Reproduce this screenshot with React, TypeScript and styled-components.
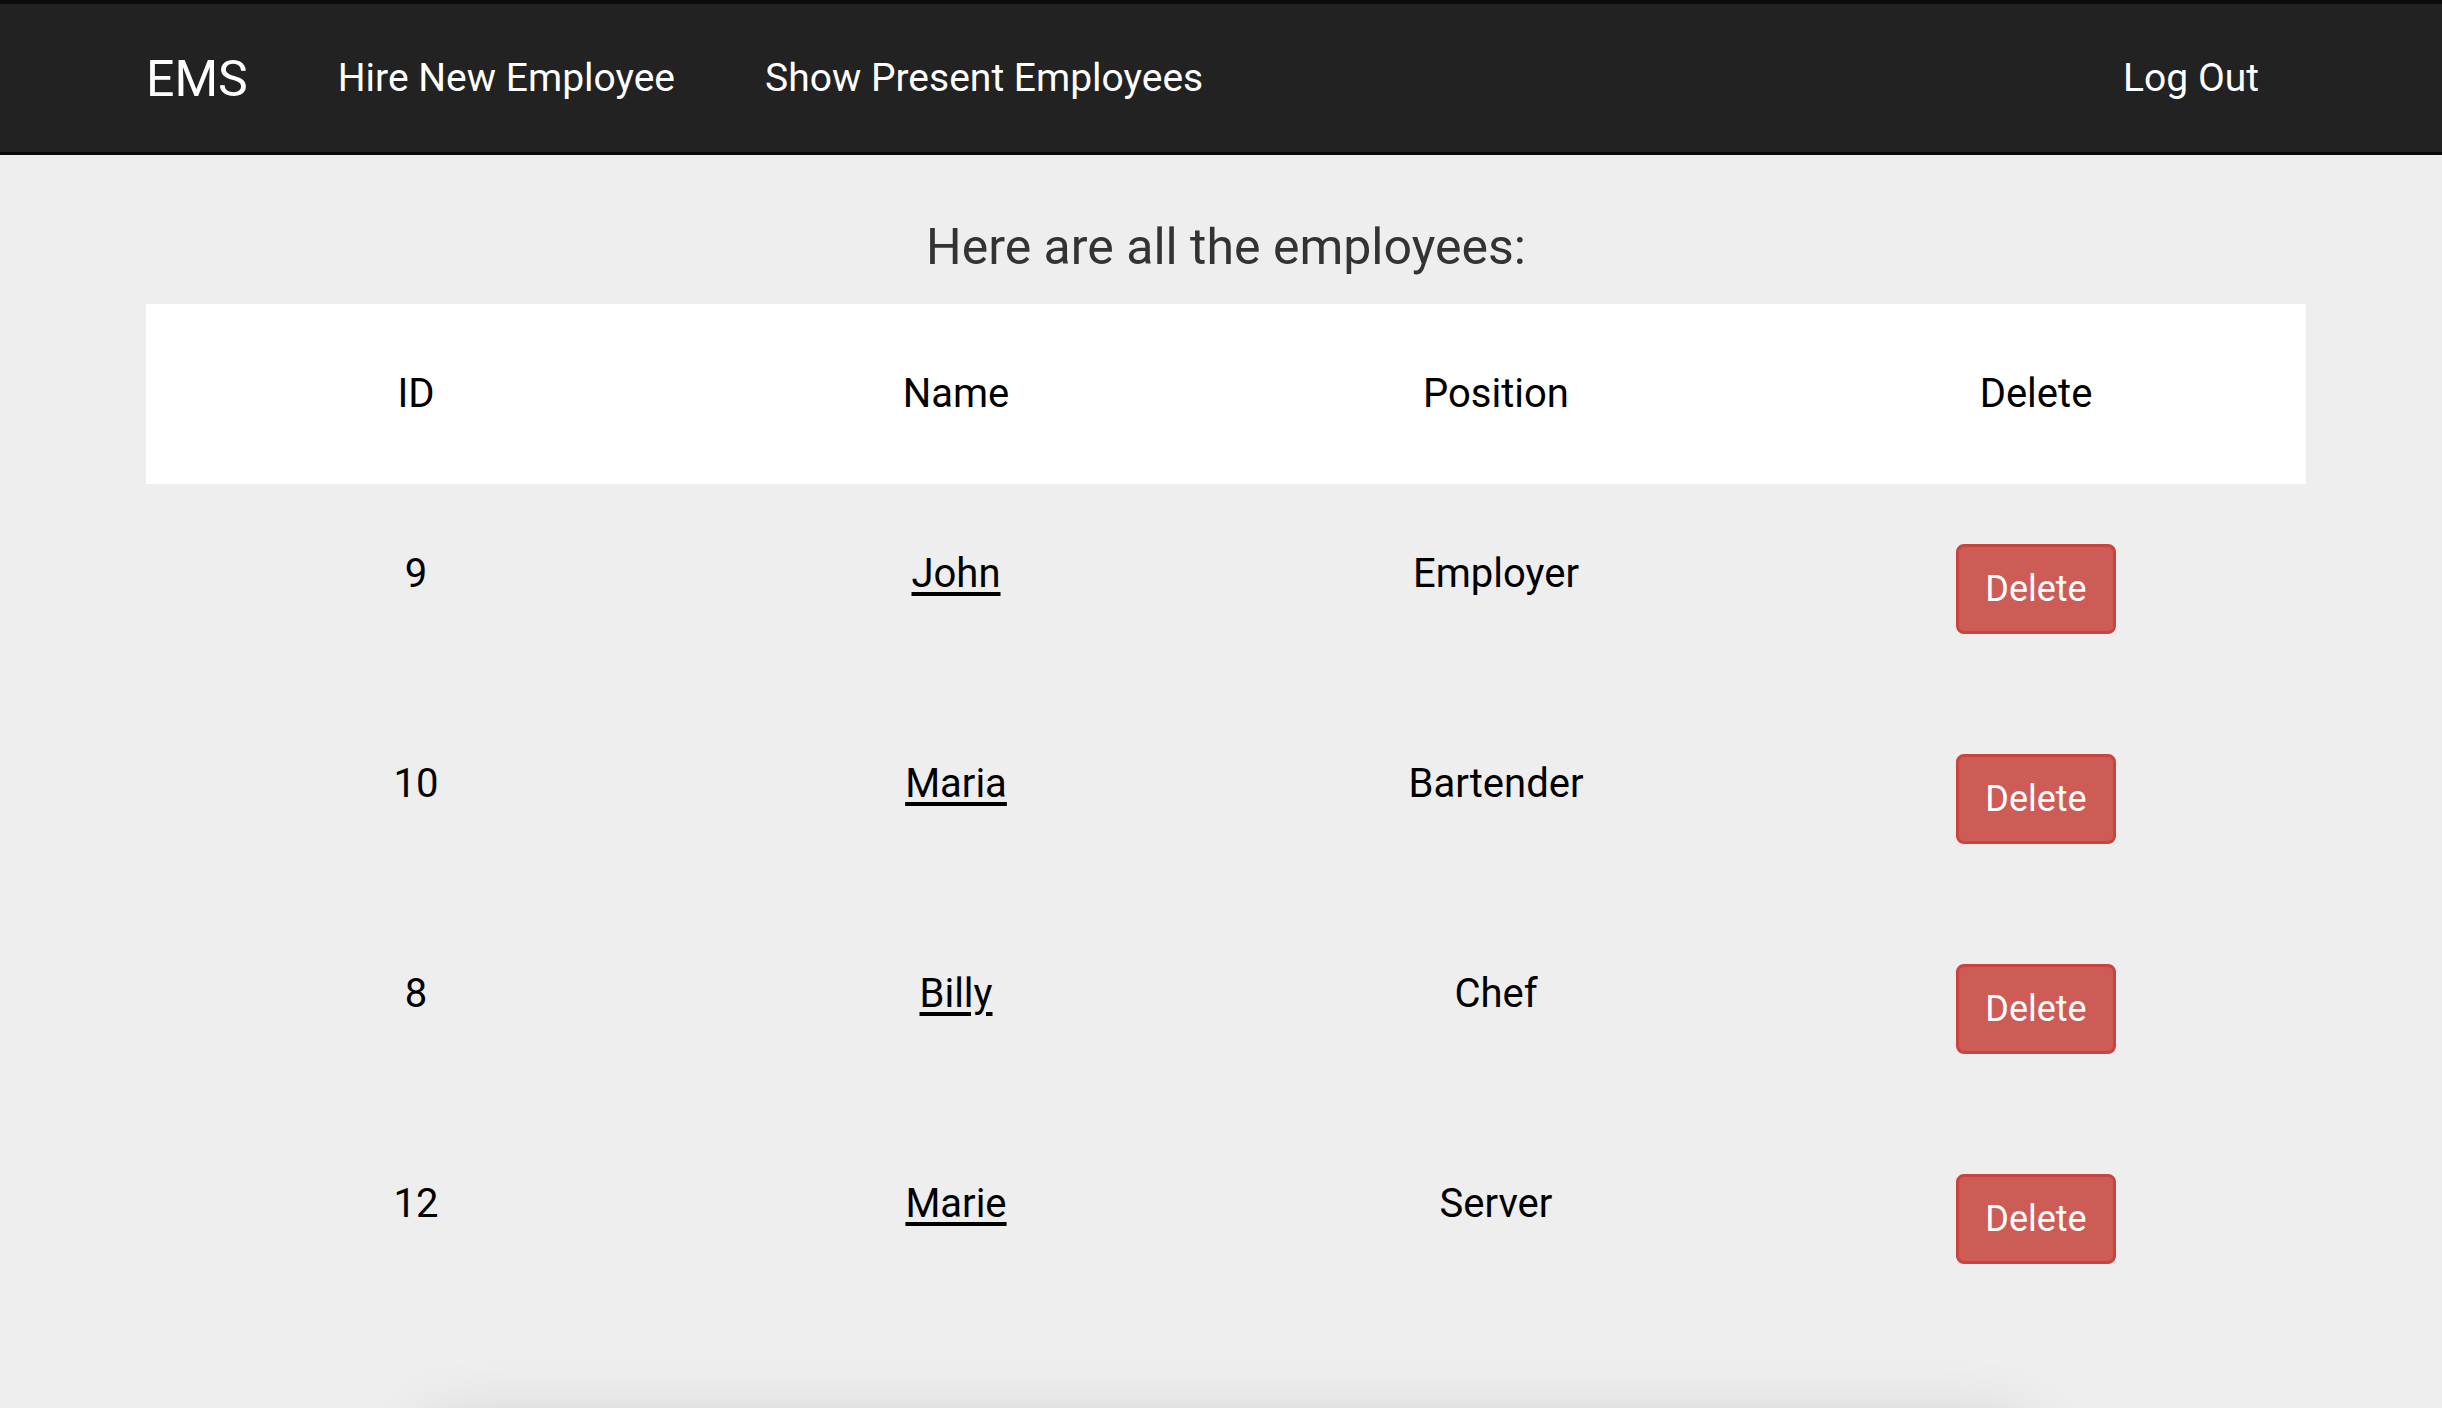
import styled, { createGlobalStyle } from 'styled-components';

const employees = [
  { id: 9, name: 'John', position: 'Employer' },
  { id: 10, name: 'Maria', position: 'Bartender' },
  { id: 8, name: 'Billy', position: 'Chef' },
  { id: 12, name: 'Marie', position: 'Server' },
];

const App = () => {
  return (
    <>
      <GlobalStyle />
      <Navbar>
        <Brand href="#">EMS</Brand>
        <NavLink href="#">Hire New Employee</NavLink>
        <NavLink href="#">Show Present Employees</NavLink>
        <NavRight>
          <NavLink href="#">Log Out</NavLink>
        </NavRight>
      </Navbar>
      <Main>
        <Heading>Here are all the employees:</Heading>
        <Table>
          <thead>
            <tr>
              <th>ID</th>
              <th>Name</th>
              <th>Position</th>
              <th>Delete</th>
            </tr>
          </thead>
          <tbody>
            {employees.map((e) => (
              <tr key={e.id}>
                <td>{e.id}</td>
                <td>
                  <NameLink href="#">{e.name}</NameLink>
                </td>
                <td>{e.position}</td>
                <td>
                  <DeleteButton>Delete</DeleteButton>
                </td>
              </tr>
            ))}
          </tbody>
        </Table>
        <Footer />
      </Main>
    </>
  );
};

export default App;

const GlobalStyle = createGlobalStyle`
  html, body {
    margin: 0;
    padding: 0;
    background: #eeeeee;
    font-family: Roboto, "Open Sans", sans-serif;
    overflow: hidden;
  }
`;

const Navbar = styled.nav`
  display: flex;
  align-items: center;
  gap: 90px;
  height: 148px;
  padding: 0 183px 0 146px;
  background: #222222;
  border-top: 4px solid #0b0b0b;
  border-bottom: 3px solid #080808;
`;

const Brand = styled.a`
  color: #ffffff;
  font-size: 50px;
  text-decoration: none;
  line-height: 1;
  margin-top: 2px;
`;

const NavLink = styled.a`
  color: #ffffff;
  font-size: 39px;
  text-decoration: none;
  line-height: 1;
`;

const NavRight = styled.div`
  margin-left: auto;
`;

const Main = styled.main`
  padding: 62px 136px 0 146px;
`;

const Heading = styled.h2`
  margin: 0 0 27px;
  text-align: center;
  color: #333333;
  font-size: 50px;
  font-weight: 400;
  line-height: 60px;
`;

const Table = styled.table`
  width: 2160px;
  border-collapse: collapse;
  table-layout: fixed;

  th,
  td {
    padding: 60px 10px;
    font-size: 40px;
    line-height: 60px;
    text-align: center;
    vertical-align: top;
    color: #000000;
    font-weight: 400;
  }

  thead tr {
    background: #ffffff;
  }
`;

const NameLink = styled.a`
  color: #000000;
  text-decoration: underline;
  text-decoration-thickness: 4px;
  text-underline-offset: 5px;
`;

const DeleteButton = styled.button`
  width: 160px;
  height: 90px;
  background: #cd5c57;
  border: 3px solid #c9443f;
  border-radius: 8px;
  color: #ffffff;
  font-family: Roboto, "Open Sans", sans-serif;
  font-size: 36px;
  cursor: pointer;
`;

const Footer = styled.div`
  width: 1600px;
  height: 200px;
  margin: 110px auto 0;
  background: #eeeeee;
  box-shadow: 0 -6px 70px rgba(0, 0, 0, 0.16);
`;
